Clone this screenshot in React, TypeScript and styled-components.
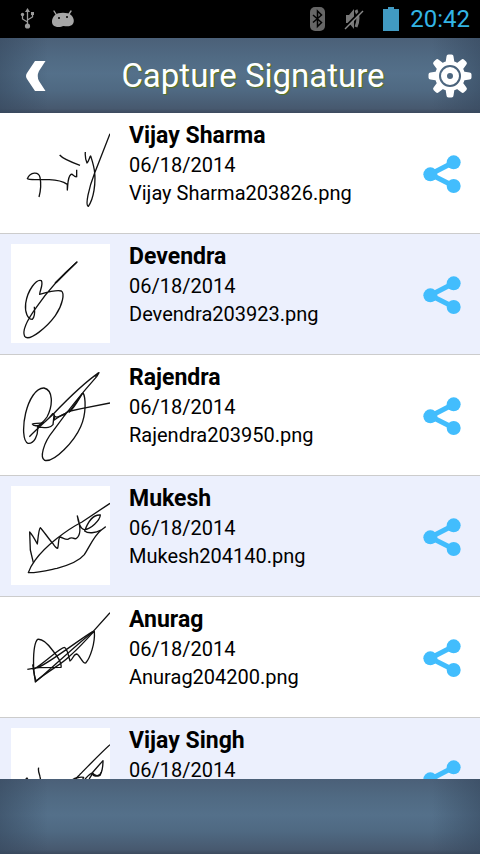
import React from "react";
import styled, { createGlobalStyle } from "styled-components";

const GlobalStyle = createGlobalStyle`
  * { box-sizing: border-box; }
  html, body { margin: 0; padding: 0; background: #000; }
  body { font-family: Roboto, "Noto Sans", sans-serif; color: #000; }
  button { appearance: none; border: 0; padding: 0; background: none; cursor: pointer; }
  svg { display: block; }
`;

const Screen = styled.div`
  display: flex;
  flex-direction: column;
  height: 100vh;
  overflow: hidden;
`;

const StatusBar = styled.div`
  flex: none;
  display: flex;
  align-items: center;
  justify-content: space-between;
  height: 38px;
  padding: 0 10px 0 20px;
  background: #000;
`;

const StatusGroup = styled.div<{ $gap: number }>`
  display: flex;
  align-items: center;
  gap: ${(p) => p.$gap}px;
`;

const Clock = styled.time`
  margin-left: -8px;
  font-size: 24px;
  line-height: 38px;
  color: #33b5e5;
`;

const steel = `
  background:
    linear-gradient(90deg, rgba(52, 70, 92, 0.55), rgba(52, 70, 92, 0) 10%, rgba(52, 70, 92, 0) 90%, rgba(52, 70, 92, 0.55)),
    linear-gradient(180deg, #4b6078 0%, #506a83 25%, #54708a 48%, #4f6982 70%, #47596f 94%, #3c4a5e 100%);
`;

const Header = styled.header`
  flex: none;
  display: flex;
  align-items: center;
  justify-content: space-between;
  height: 75px;
  padding: 0 8px 0 14px;
  ${steel}
`;

const Footer = styled.footer`
  flex: none;
  height: 75px;
  ${steel}
`;

const Title = styled.h1`
  flex: 1;
  margin: 0;
  padding-left: 20px;
  text-align: center;
  font-size: 33px;
  font-weight: 400;
  line-height: 40px;
  color: #fff;
  text-shadow: 1px 1px 1px #56721c;
`;

const IconButton = styled.button`
  flex: none;
  display: grid;
  place-items: center;
  width: 44px;
  height: 44px;
`;

const List = styled.ul`
  flex: 1;
  min-height: 0;
  margin: 0;
  padding: 0;
  list-style: none;
  overflow: hidden;
  background: #fff;
`;

const Row = styled.li`
  display: flex;
  align-items: flex-start;
  height: 121px;
  padding: 10px 16px 0 11px;
  border-bottom: 1px solid #ccc;
  background: #fff;
  &:nth-child(even) { background: #ecf0fd; }
`;

const Thumb = styled.svg`
  flex: none;
  width: 99px;
  height: 99px;
  background: #fff;
`;

const Details = styled.div`
  flex: 1;
  min-width: 0;
  padding-left: 19px;
`;

const Name = styled.h2`
  margin: 0;
  font-size: 23px;
  font-weight: 700;
  line-height: 26px;
`;

const Line = styled.p`
  margin: 0;
  font-size: 20px;
  line-height: 28px;
  &:first-of-type { margin-top: 2px; }
`;

const ShareButton = styled(IconButton)`
  height: 102px;
`;

interface Signature {
  name: string;
  date: string;
  file: string;
  strokes: string[];
}

const signatures: Signature[] = [
  {
    name: "Vijay Sharma",
    date: "06/18/2014",
    file: "Vijay Sharma203826.png",
    strokes: [
      "M117 252C121 237 124 213 120 193C116 175 91 176 82 197C85 202 106 199 148 200C176 201 190 206 202 214V231C204 211 203 190 213 184C220 182 221 193 230 191V170",
      "M179 126C184 132 199 142 240 157",
      "M256 117C255 128 258 143 261 150C266 146 270 128 272 129C275 139 282 158 284 179C287 210 282 256 265 280C255 277 266 226 284 180L330 62",
    ],
  },
  {
    name: "Devendra",
    date: "06/18/2014",
    file: "Devendra203923.png",
    strokes: [
      "M231 84C190 120 142 172 109 220C85 253 65 289 74 307C88 325 142 278 166 245C189 212 194 177 184 171C169 166 137 176 119 181C119 170 131 151 124 140C109 134 83 168 77 208C74 235 83 256 97 256C108 244 103 225 103 218",
      "M165 147L231 84L168 146",
    ],
  },
  {
    name: "Rajendra",
    date: "06/18/2014",
    file: "Rajendra203950.png",
    strokes: [
      "M88 245C111 222 130 205 158 179C205 130 254 82 297 53L290 65C257 102 205 165 160 227C129 265 119 309 134 316C164 323 223 258 242 215C260 175 257 127 249 113C238 129 225 157 208 171C214 152 202 177 188 180C178 183 170 191 163 195C164 181 163 175 158 176C150 186 137 201 126 207C113 215 99 213 97 207C104 204 119 207 132 202",
      "M113 211C116 243 101 267 84 265C69 259 67 217 77 174C87 133 108 98 132 99C159 105 160 149 141 186C130 203 119 207 112 216C135 217 148 222 159 209L162 182C171 194 186 178 211 168L244 161L330 144",
      "M208 171L247 115M285 65L295 54",
    ],
  },
  {
    name: "Mukesh",
    date: "06/18/2014",
    file: "Mukesh204140.png",
    strokes: [
      "M100 260L91 222L89 168C97 176 105 191 112 204C114 188 116 159 121 155C130 164 146 189 159 203C164 211 169 217 173 217C177 202 174 184 181 183C192 187 202 194 207 188C217 181 219 190 228 188C242 179 244 158 232 120C234 135 241 160 253 161C272 160 300 133 301 117C278 115 263 140 254 165C263 173 287 172 303 162",
      "M330 82L246 138C199 162 136 210 105 253C96 265 89 277 85 290C114 291 151 281 171 277C209 267 239 253 253 236C270 209 283 178 304 162L316 153L297 167",
    ],
  },
  {
    name: "Anurag",
    date: "06/18/2014",
    file: "Anurag204200.png",
    strokes: [
      "M82 217L113 212L183 211C186 199 171 176 157 159C142 139 126 125 113 127C99 141 100 188 101 217L106 255C142 225 228 144 279 104L330 47",
      "M98 202L103 234L108 252C152 217 184 202 206 180C238 153 264 121 283 103C286 139 270 184 257 198C248 202 238 170 229 171C219 174 218 188 210 192C206 178 201 151 193 151C178 153 140 193 98 219M112 213C160 190 231 132 279 103",
    ],
  },
  {
    name: "Vijay Singh",
    date: "06/18/2014",
    file: "Vijay Singh204225.png",
    strokes: [
      "M330 80C300 107 265 144 240 169C226 184 209 203 190 218",
      "M64 198L81 180L98 210",
      "M116 149C113 160 119 168 120 176L126 208",
      "M214 188C222 180 241 176 251 178L241 200C254 184 269 166 278 164C272 178 259 195 278 167C279 176 291 176 300 172C307 160 309 142 309 128C298 140 285 155 277 164C282 173 299 179 303 163",
    ],
  },
];

const UsbIcon = () => (
  <svg width="16" height="22" viewBox="0 0 16 22" fill="none" stroke="#9b9b9b" strokeWidth="1.3" aria-hidden="true">
    <path d="M7.5 3v14M7.5 14L2.5 11V7M7.5 12L12.5 9V6" />
    <path d="M7.5 0L10 4H5zM11 4h3v3h-3z" fill="#9b9b9b" stroke="none" />
    <circle cx="2.5" cy="6.5" r="1.7" fill="#9b9b9b" stroke="none" />
    <circle cx="7.5" cy="18" r="2.6" fill="#9b9b9b" stroke="none" />
  </svg>
);

const AndroidIcon = () => (
  <svg width="23" height="18" viewBox="0 0 23 18" aria-hidden="true">
    <path
      d="M3 5C6 2 16 2 19 5C22 8 23 12 20 15C17 17 14 16 11.5 16C9 17 4 18 1 15C-1 12 0 8 3 5Z"
      fill="#a6a6a6"
    />
    <path d="M2 1L4.500 5M19 1L17 4" stroke="#a6a6a6" strokeWidth="1.4" strokeLinecap="round" />
    <circle cx="7" cy="8" r="1" fill="#000" />
    <circle cx="15" cy="7" r="1" fill="#000" />
  </svg>
);

const BluetoothIcon = () => (
  <svg width="15" height="24" viewBox="0 0 15 24" fill="none" aria-hidden="true">
    <rect width="15" height="24" rx="5" fill="#666" />
    <path d="M3 8L11.5 15.5L7.5 19.5V4L11.5 8L3 15.5" stroke="#000" strokeWidth="1.5" />
  </svg>
);

const MutedIcon = () => (
  <svg width="20" height="22" viewBox="0 0 20 22" fill="none" aria-hidden="true">
    <path d="M2 7H5L10 1V21L5 15H2Z" fill="#777" />
    <path d="M12 2Q16 10 12 19" stroke="#777" strokeWidth="3" />
    <path d="M0 20L18 2" stroke="#000" strokeWidth="2" />
    <path d="M1 21L19 3" stroke="#888" strokeWidth="1.4" />
  </svg>
);

const BatteryIcon = () => (
  <svg width="16" height="24" viewBox="0 0 16 24" aria-hidden="true">
    <path d="M5 0H11V2H16V24H0V2H5Z" fill="#419ac2" />
  </svg>
);

const BackIcon = () => (
  <svg width="20" height="30" viewBox="0 0 20 30" aria-hidden="true">
    <path d="M9 0H19.500L13 10Q10.500 15 13 20L19.500 30H9L1 18Q-1 15 1 12Z" fill="#fff" />
  </svg>
);

const GearIcon = () => (
  <svg width="44" height="44" viewBox="-22 -22 44 44" aria-hidden="true">
    <g fill="#fff">
      {[0, 45, 90, 135, 180, 225, 270, 315].map((angle) => (
        <path
          key={angle}
          d="M-3.5 -19.500Q-3.5 -21.500 -1.500 -21.500H1.500Q3.5 -21.500 3.5 -19.500L4.500 -13H-4.500Z"
          transform={`rotate(${angle})`}
        />
      ))}
    </g>
    <circle r="13" fill="none" stroke="#fff" strokeWidth="4" />
    <circle r="6" fill="none" stroke="#fff" strokeWidth="6" />
  </svg>
);

const ShareIcon = () => (
  <svg width="38" height="38" viewBox="68 44 114 114" aria-hidden="true">
    <path d="M160 66L90 102L160 137" fill="none" stroke="#42bdfd" strokeWidth="15" />
    <g fill="#42bdfd">
      <circle cx="90" cy="102" r="21" />
      <circle cx="160" cy="66" r="21" />
      <circle cx="160" cy="137" r="21" />
    </g>
  </svg>
);

export default function App() {
  return (
    <>
      <GlobalStyle />
      <Screen>
        <StatusBar>
          <StatusGroup $gap={16}>
            <UsbIcon />
            <AndroidIcon />
          </StatusGroup>
          <StatusGroup $gap={19}>
            <BluetoothIcon />
            <MutedIcon />
            <BatteryIcon />
            <Clock>20:42</Clock>
          </StatusGroup>
        </StatusBar>
        <Header>
          <IconButton type="button" aria-label="Back">
            <BackIcon />
          </IconButton>
          <Title>Capture Signature</Title>
          <IconButton type="button" aria-label="Settings">
            <GearIcon />
          </IconButton>
        </Header>
        <List>
          {signatures.map((item) => (
            <Row key={item.name}>
              <Thumb viewBox="33 30 297 297" role="img" aria-label={`Signature of ${item.name}`}>
                <g fill="none" stroke="#111" strokeWidth="4" strokeLinejoin="round">
                  {item.strokes.map((d) => (
                    <path key={d} d={d} />
                  ))}
                </g>
              </Thumb>
              <Details>
                <Name>{item.name}</Name>
                <Line>{item.date}</Line>
                <Line>{item.file}</Line>
              </Details>
              <ShareButton type="button" aria-label={`Share ${item.name}`}>
                <ShareIcon />
              </ShareButton>
            </Row>
          ))}
        </List>
        <Footer />
      </Screen>
    </>
  );
}
